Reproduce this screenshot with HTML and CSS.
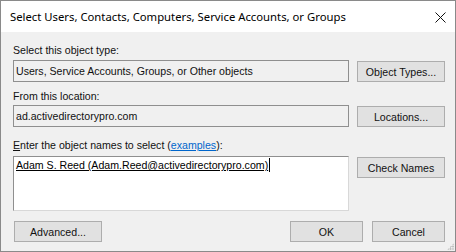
FILE: index.html
```html
<!DOCTYPE html>
<html lang="en">
<head>
<meta charset="UTF-8">
<title>Select Users, Contacts, Computers, Service Accounts, or Groups</title>
<link rel="stylesheet" href="styles.css">
</head>
<body>
<div class="window">
  <div class="titlebar">
    <span class="title">Select Users, Contacts, Computers, Service Accounts, or Groups</span>
    <svg class="close" width="11" height="11" viewBox="0 0 11 11"><path d="M0.5 0.5 L10.5 10.5 M10.5 0.5 L0.5 10.5" stroke="#111" stroke-width="1" fill="none"/></svg>
  </div>

  <div class="content">
    <div class="label l1">Select this object type:</div>
    <div class="row">
      <div class="field">Users, Service Accounts, Groups, or Other objects</div>
      <button class="btn">Object Types...</button>
    </div>

    <div class="label l2">From this location:</div>
    <div class="row">
      <div class="field">ad.activedirectorypro.com</div>
      <button class="btn">Locations...</button>
    </div>

    <div class="label l3"><u>E</u>nter the object names to select (<a href="#">examples</a>):</div>
    <div class="row">
      <div class="names"><span class="resolved">Adam S. Reed (Adam.Reed@activedirectorypro.com)</span><span class="caret"></span></div>
      <button class="btn">Check Names</button>
    </div>

    <div class="footer">
      <button class="btn">Advanced...</button>
      <div class="actions">
        <button class="btn small">OK</button>
        <button class="btn small">Cancel</button>
      </div>
    </div>
  </div>
  <div class="grip"></div>
</div>
</body>
</html>
```

FILE: styles.css
```css
* { margin:0; padding:0; box-sizing:border-box; }
body { background:#fff; font-family:'Liberation Sans', Arial, sans-serif; font-size:10.6px; color:#000; }
.window { width:456px; height:252px; border:1px solid #8a8a8a; background:#f0f0f0; position:relative; display:flex; flex-direction:column; }

.titlebar { height:31px; background:#fff; display:flex; align-items:center; justify-content:space-between; padding:0 9px 0 9px; }
.title { font-family:'Noto Sans', 'Open Sans', sans-serif; font-size:11.3px; color:#000; }
.close { margin-top:1px; }

.content { padding:0 10px 0 12px; }
.label { height:13px; line-height:13px; white-space:nowrap; color:#111; }
.label.l1 { margin-top:12px; }
.label.l2 { margin-top:8px; }
.label.l3 { margin-top:12px; }
.label a { color:#0066cc; text-decoration:underline; }

.row { display:grid; grid-template-columns:336px 88px; column-gap:8px; align-items:start; }
.label.l1 + .row { margin-top:3px; }
.label.l2 + .row { margin-top:2px; }
.label.l3 + .row { margin-top:4px; }

.field { height:22px; line-height:20px; border:1px solid #8f8f8f; background:#f0f0f0; padding-left:2px; white-space:nowrap; overflow:hidden; color:#111; }
.names { height:55px; border:1px solid #8f8f8f; border-right-color:#d8d8d8; border-bottom-color:#d8d8d8; background:#fff; padding:2px 0 0 2px; white-space:nowrap; display:flex; align-items:flex-start; }
.resolved { text-decoration:underline; line-height:13px; }
.caret { display:inline-block; width:1px; height:14px; background:#000; margin-left:1px; margin-top:-1px; }

.btn { height:21px; margin-top:1px; border:1px solid #adadad; background:#e1e1e1; font-family:'Liberation Sans', Arial, sans-serif; font-size:10.6px; color:#111; text-align:center; }

.footer { display:flex; justify-content:space-between; margin-top:10px; }
.footer .btn { margin-top:0; width:88px; margin-left:1px; }
.actions { display:flex; gap:9px; }
.footer .btn.small { width:73px; margin-left:0; }

.grip { position:absolute; right:1px; bottom:1px; width:7px; height:7px; background:radial-gradient(circle, #b0b0b0 0.7px, transparent 1px) 0 0 / 2.4px 2.4px; clip-path:polygon(100% 0, 100% 100%, 0 100%); }
```
